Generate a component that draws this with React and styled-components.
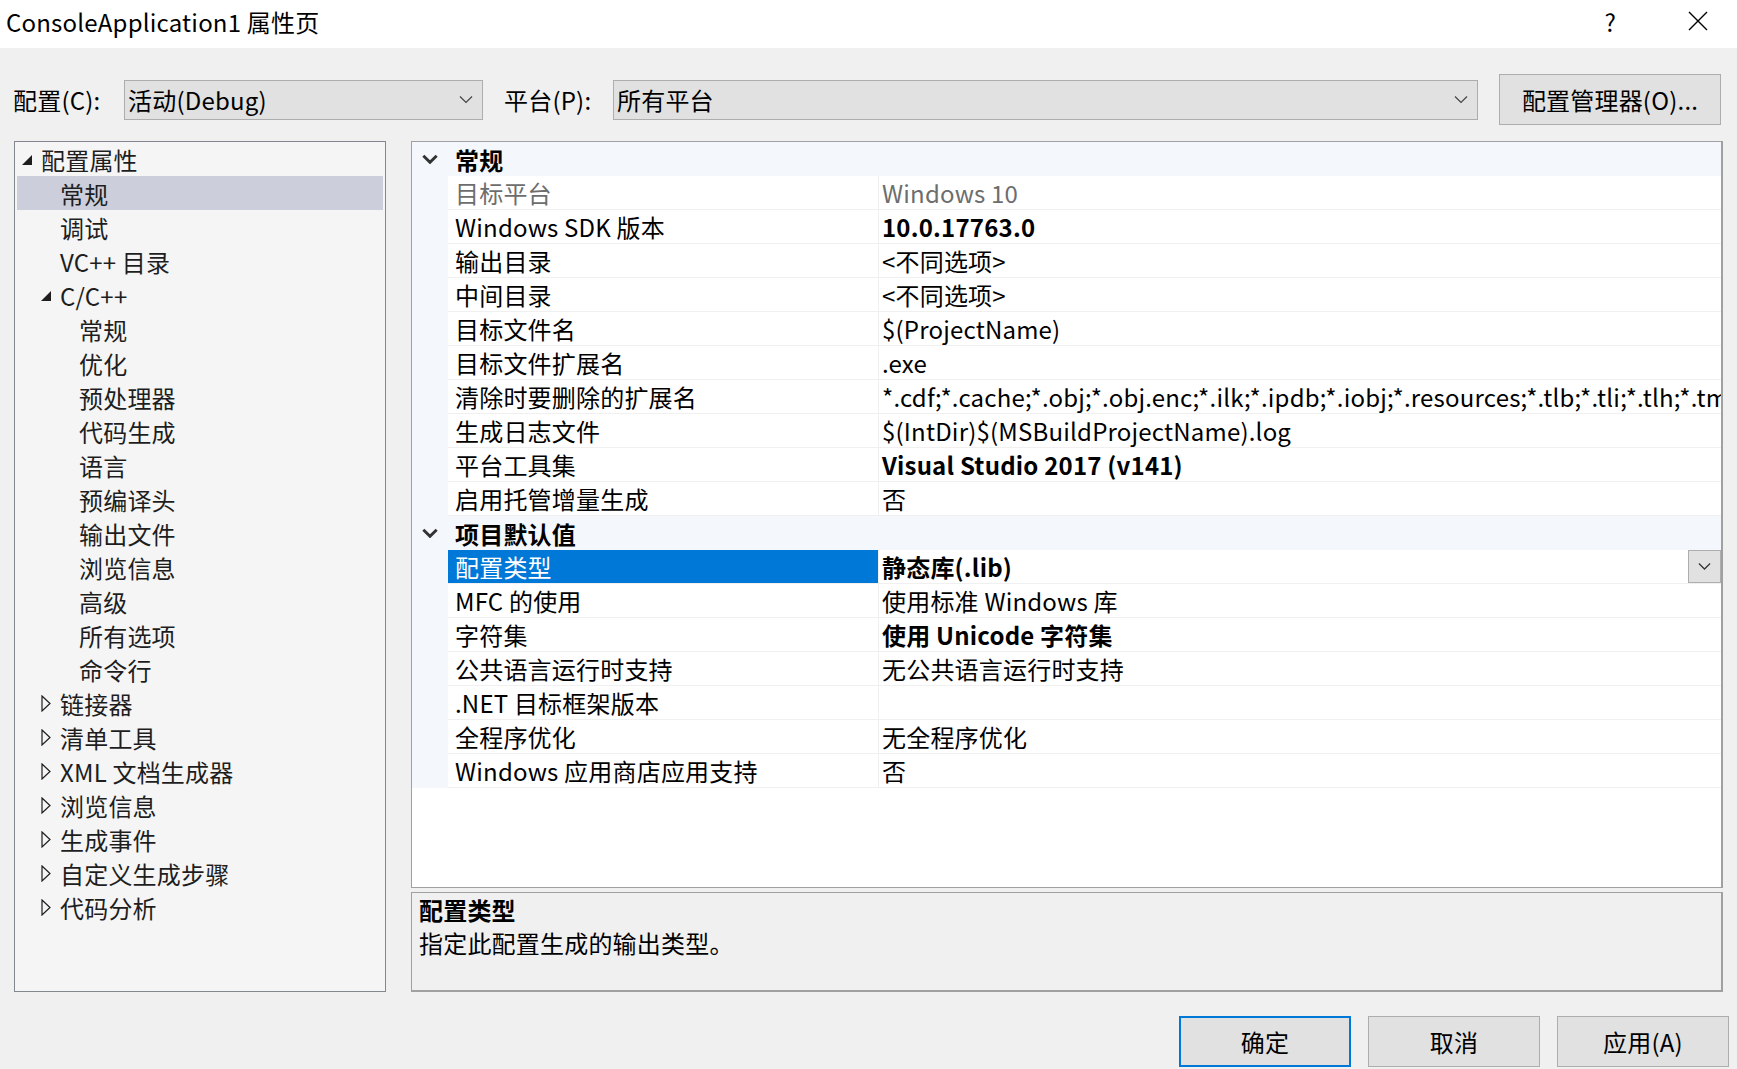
import React from "react";
import styled, { createGlobalStyle } from "styled-components";

const GlobalStyle = createGlobalStyle`
    html, body {
        margin: 0;
        padding: 0;
        background: #f0f0f0;
    }
    body {
        font-family: "Noto Sans CJK SC", "Noto Sans", sans-serif;
        font-size: 24px;
        letter-spacing: 0.2px;
        color: #000;
    }
`;

const treeItems = [
    { label: "配置属性", level: 0, expander: "open" },
    { label: "常规", level: 1, selected: true },
    { label: "调试", level: 1 },
    { label: "VC++ 目录", level: 1 },
    { label: "C/C++", level: 1, expander: "open" },
    { label: "常规", level: 2 },
    { label: "优化", level: 2 },
    { label: "预处理器", level: 2 },
    { label: "代码生成", level: 2 },
    { label: "语言", level: 2 },
    { label: "预编译头", level: 2 },
    { label: "输出文件", level: 2 },
    { label: "浏览信息", level: 2 },
    { label: "高级", level: 2 },
    { label: "所有选项", level: 2 },
    { label: "命令行", level: 2 },
    { label: "链接器", level: 1, expander: "closed" },
    { label: "清单工具", level: 1, expander: "closed" },
    { label: "XML 文档生成器", level: 1, expander: "closed" },
    { label: "浏览信息", level: 1, expander: "closed" },
    { label: "生成事件", level: 1, expander: "closed" },
    { label: "自定义生成步骤", level: 1, expander: "closed" },
    { label: "代码分析", level: 1, expander: "closed" },
];

const groups = [
    {
        title: "常规",
        rows: [
            { name: "目标平台", value: "Windows 10", muted: true },
            { name: "Windows SDK 版本", value: "10.0.17763.0", bold: true },
            { name: "输出目录", value: "<不同选项>" },
            { name: "中间目录", value: "<不同选项>" },
            { name: "目标文件名", value: "$(ProjectName)" },
            { name: "目标文件扩展名", value: ".exe" },
            {
                name: "清除时要删除的扩展名",
                value: "*.cdf;*.cache;*.obj;*.obj.enc;*.ilk;*.ipdb;*.iobj;*.resources;*.tlb;*.tli;*.tlh;*.tmp;*.rsp;*.pgc;*.pgd;*.meta;*.tlog;*.manifest;*.res;*.pch;*.exp;*.idb;*.rep;*.xdc;*.pdb;*_manifest.rc;*.bsc;*.sbr;*.xml;*.metagen;*.bi",
            },
            { name: "生成日志文件", value: "$(IntDir)$(MSBuildProjectName).log" },
            { name: "平台工具集", value: "Visual Studio 2017 (v141)", bold: true },
            { name: "启用托管增量生成", value: "否" },
        ],
    },
    {
        title: "项目默认值",
        rows: [
            { name: "配置类型", value: "静态库(.lib)", bold: true, selected: true },
            { name: "MFC 的使用", value: "使用标准 Windows 库" },
            { name: "字符集", value: "使用 Unicode 字符集", bold: true },
            { name: "公共语言运行时支持", value: "无公共语言运行时支持" },
            { name: ".NET 目标框架版本", value: "" },
            { name: "全程序优化", value: "无全程序优化" },
            { name: "Windows 应用商店应用支持", value: "否" },
        ],
    },
];

function Chevron({ size = 14, weight = 1.2, color = "#444" }) {
    return (
        <svg width={size} height={size / 2 + 2} viewBox="0 0 14 9" fill="none">
            <path d="M1 1.5 L7 7.5 L13 1.5" stroke={color} strokeWidth={weight} />
        </svg>
    );
}

function Expander({ kind }) {
    if (kind === "open") {
        return (
            <svg width="11" height="11" viewBox="0 0 11 11">
                <polygon points="10,0 10,10 0,10" fill="#1e1e1e" />
            </svg>
        );
    }
    if (kind === "closed") {
        return (
            <svg width="10" height="17" viewBox="0 0 10 17">
                <polygon points="1,1 9,8.5 1,16" fill="none" stroke="#1e1e1e" strokeWidth="1.2" />
            </svg>
        );
    }
    return null;
}

function App() {
    return (
        <>
            <GlobalStyle />
            <Window>
                <TitleBar>
                    <span>ConsoleApplication1 属性页</span>
                    <TitleButtons>
                        <HelpMark>?</HelpMark>
                        <svg width="20" height="20" viewBox="0 0 20 20">
                            <path d="M1 1 L19 19 M19 1 L1 19" stroke="#000" strokeWidth="1.4" />
                        </svg>
                    </TitleButtons>
                </TitleBar>

                <TopRow>
                    <Label>配置(C):</Label>
                    <Combo $width={359}>
                        <span>活动(Debug)</span>
                        <Chevron />
                    </Combo>
                    <Label $gap>平台(P):</Label>
                    <Combo $width={865}>
                        <span>所有平台</span>
                        <Chevron />
                    </Combo>
                    <PushButton $width={222} $height={51}>配置管理器(O)...</PushButton>
                </TopRow>

                <Main>
                    <Tree>
                        {treeItems.map((item, i) => (
                            <TreeRow key={i} $selected={item.selected}>
                                <TreeIndent $level={item.level}>
                                    <ExpanderCell $kind={item.expander}>
                                        <Expander kind={item.expander} />
                                    </ExpanderCell>
                                    <span>{item.label}</span>
                                </TreeIndent>
                            </TreeRow>
                        ))}
                    </Tree>

                    <RightColumn>
                        <Grid>
                            {groups.map((group) => (
                                <React.Fragment key={group.title}>
                                    <CategoryRow>
                                        <Gutter>
                                            <Chevron size={16} weight={2.6} color="#333" />
                                        </Gutter>
                                        <CategoryTitle>{group.title}</CategoryTitle>
                                    </CategoryRow>
                                    {group.rows.map((row) => (
                                        <PropRow key={row.name}>
                                            <Gutter />
                                            <NameCell $selected={row.selected} $muted={row.muted}>
                                                {row.name}
                                            </NameCell>
                                            <ValueCell $bold={row.bold} $muted={row.muted}>
                                                <span>{row.value}</span>
                                                {row.selected && (
                                                    <DropButton>
                                                        <Chevron size={13} weight={1.3} color="#333" />
                                                    </DropButton>
                                                )}
                                            </ValueCell>
                                        </PropRow>
                                    ))}
                                </React.Fragment>
                            ))}
                        </Grid>
                        <Description>
                            <DescTitle>配置类型</DescTitle>
                            <div>指定此配置生成的输出类型。</div>
                        </Description>
                    </RightColumn>
                </Main>

                <ButtonRow>
                    <PushButton $width={172} $height={51} $default>确定</PushButton>
                    <PushButton $width={172} $height={51}>取消</PushButton>
                    <PushButton $width={172} $height={51}>应用(A)</PushButton>
                </ButtonRow>
            </Window>
        </>
    );
}

const Window = styled.div`
    width: 1737px;
    height: 1069px;
    display: flex;
    flex-direction: column;
    background: #f0f0f0;
    overflow: hidden;
`;

const TitleBar = styled.div`
    height: 48px;
    flex-shrink: 0;
    background: #fff;
    display: flex;
    align-items: center;
    justify-content: space-between;
    padding-left: 6px;
    padding-bottom: 6px;
    box-sizing: border-box;
`;

const TitleButtons = styled.div`
    display: flex;
    align-items: center;
    gap: 72px;
    padding-right: 29px;
`;

const HelpMark = styled.span`
    font-size: 24px;
`;

const TopRow = styled.div`
    display: flex;
    align-items: center;
    height: 51px;
    margin-top: 26px;
    padding-left: 13px;
`;

const Label = styled.span`
    width: ${(p) => (p.$gap ? "109px" : "111px")};
    margin-left: ${(p) => (p.$gap ? "21px" : "0")};
    white-space: nowrap;
`;

const Combo = styled.div`
    width: ${(p) => p.$width}px;
    height: 40px;
    box-sizing: border-box;
    background: #e1e1e1;
    border: 1px solid #adadad;
    display: flex;
    align-items: center;
    justify-content: space-between;
    padding: 0 9px 0 3px;
`;

const PushButton = styled.div`
    width: ${(p) => p.$width}px;
    height: ${(p) => p.$height}px;
    box-sizing: border-box;
    background: #e1e1e1;
    border: ${(p) => (p.$default ? "2px solid #0078d7" : "1px solid #adadad")};
    display: flex;
    align-items: center;
    justify-content: center;
    margin-left: 21px;
    white-space: nowrap;
`;

const Main = styled.div`
    display: grid;
    grid-template-columns: 372px 1312px;
    column-gap: 25px;
    height: 851px;
    margin-top: 16px;
    padding-left: 14px;
`;

const Tree = styled.div`
    background: #f5f5f5;
    border: 1px solid #828790;
    padding: 0 2px;
    display: flex;
    flex-direction: column;
`;

const TreeRow = styled.div`
    height: 34px;
    flex-shrink: 0;
    display: flex;
    align-items: center;
    background: ${(p) => (p.$selected ? "#cccedb" : "transparent")};
    color: #1e1e1e;
`;

const TreeIndent = styled.div`
    display: flex;
    align-items: center;
    padding-left: ${(p) => 5 + p.$level * 19}px;
`;

const ExpanderCell = styled.div`
    width: 19px;
    display: flex;
    align-items: center;
    justify-content: flex-start;
    margin-top: ${(p) => (p.$kind === "open" ? "2px" : "0")};
`;

const RightColumn = styled.div`
    display: flex;
    flex-direction: column;
    gap: 4px;
`;

const Grid = styled.div`
    height: 747px;
    box-sizing: border-box;
    background: #fff;
    border: 1px solid #a0a0a0;
    border-right-width: 2px;
    overflow: hidden;
    display: flex;
    flex-direction: column;
`;

const CategoryRow = styled.div`
    height: 34px;
    flex-shrink: 0;
    display: flex;
    align-items: center;
    background: #f4f7fb;
`;

const Gutter = styled.div`
    width: 36px;
    flex-shrink: 0;
    align-self: stretch;
    display: flex;
    align-items: center;
    justify-content: center;
    background: #f4f7fb;
`;

const CategoryTitle = styled.span`
    font-weight: 700;
    padding-left: 7px;
`;

const PropRow = styled.div`
    height: 34px;
    flex-shrink: 0;
    display: flex;
`;

const NameCell = styled.div`
    width: 431px;
    flex-shrink: 0;
    box-sizing: border-box;
    padding-left: 7px;
    display: flex;
    align-items: center;
    border-bottom: 1px solid #f0f0f0;
    border-right: 1px solid #f0f0f0;
    white-space: nowrap;
    background: ${(p) => (p.$selected ? "#0078d7" : "#fff")};
    color: ${(p) => (p.$selected ? "#fff" : p.$muted ? "#6d6d6d" : "#000")};
`;

const ValueCell = styled.div`
    flex: 1;
    min-width: 0;
    box-sizing: border-box;
    padding-left: 3px;
    display: flex;
    align-items: center;
    justify-content: space-between;
    border-bottom: 1px solid #f0f0f0;
    white-space: nowrap;
    overflow: hidden;
    font-weight: ${(p) => (p.$bold ? 700 : 400)};
    color: ${(p) => (p.$muted ? "#6d6d6d" : "#000")};
`;

const DropButton = styled.div`
    width: 33px;
    height: 33px;
    flex-shrink: 0;
    box-sizing: border-box;
    background: #e1e1e1;
    border: 1px solid #adadad;
    display: flex;
    align-items: center;
    justify-content: center;
`;

const Description = styled.div`
    flex: 1;
    box-sizing: border-box;
    border: 1px solid #a0a0a0;
    border-right-width: 2px;
    border-bottom-width: 2px;
    padding: 0 7px;
    line-height: 33px;
`;

const DescTitle = styled.div`
    font-weight: 700;
`;

const ButtonRow = styled.div`
    display: flex;
    justify-content: flex-end;
    padding-right: 8px;
    margin-top: 24px;
    & > div {
        margin-left: 17px;
    }
`;

export default App;
